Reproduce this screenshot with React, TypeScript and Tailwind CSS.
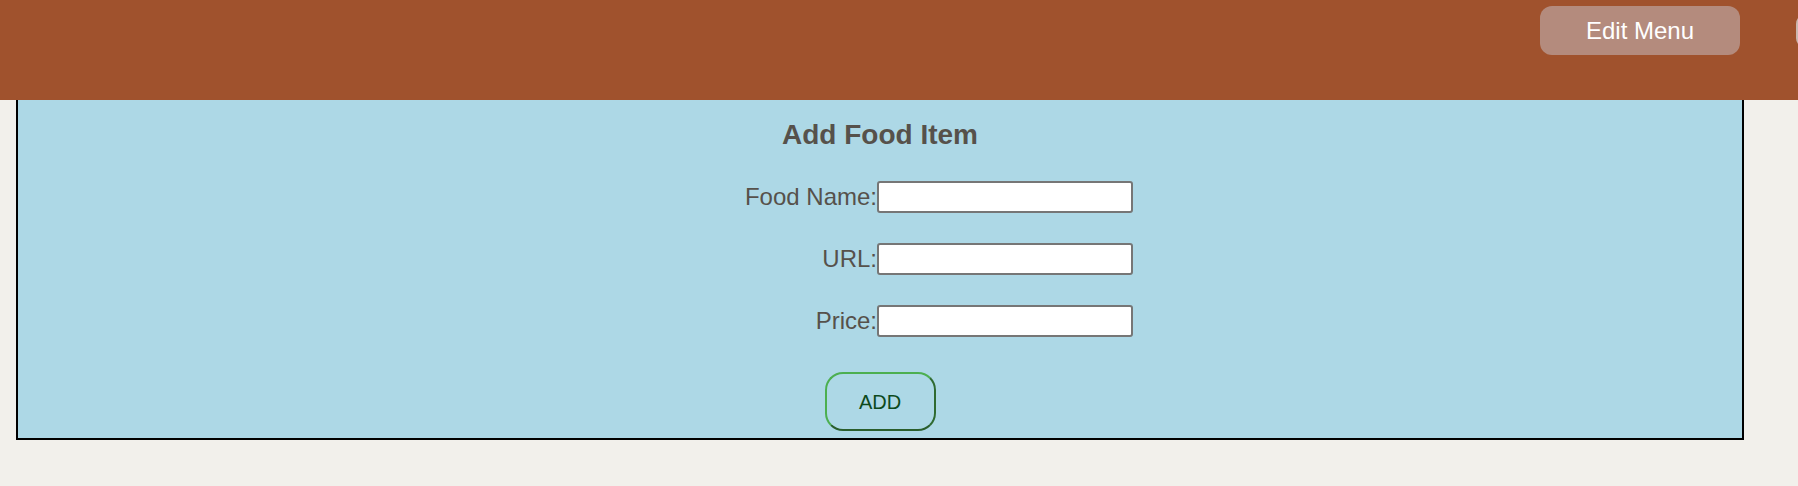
import React, { useState } from 'react';

const FormRow: React.FC<{ label: string; value: string; onChange: (v: string) => void }> = ({ label, value, onChange }) => (
    <div className="flex items-center">
        <label className="w-[250px] text-right text-[24px] leading-[28px] text-[#56514b]">{label}</label>
        <input
            type="text"
            value={value}
            onChange={(e) => onChange(e.target.value)}
            className="w-[256px] h-[32px] bg-white border-2 border-[#767676] rounded-[3px] px-1 text-[20px] outline-none"
        />
    </div>
);

export default function App() {
    const [name, setName] = useState('');
    const [url, setUrl] = useState('');
    const [price, setPrice] = useState('');

    return (
        <div className="min-h-screen w-full bg-[#f2f0eb] font-['Liberation_Sans',Arial,Helvetica,sans-serif]">
            {/* top bar */}
            <header className="h-[100px] bg-[#a0522d] flex items-start overflow-hidden">
                <div className="flex-grow" />
                <button className="mt-[6px] w-[200px] h-[49px] shrink-0 rounded-[12px] bg-[#b48b7d] text-white text-[24px] leading-none">
                    Edit Menu
                </button>
                <div className="ml-[56px] mt-[14px] w-[120px] h-[34px] shrink-0 -mr-[118px] rounded-[10px] bg-[#cbb7b0]" />
            </header>

            <div className="ml-[16px] mr-[54px] h-[340px] bg-[#add8e6] border-2 border-t-0 border-black flex flex-col items-center">
                <h2 className="pt-[19px] text-[28px] leading-[32px] font-bold text-[#56514b]">Add Food Item</h2>

                <div className="mt-[30px] flex flex-col gap-[30px]">
                    <FormRow label="Food Name:" value={name} onChange={setName} />
                    <FormRow label="URL:" value={url} onChange={setUrl} />
                    <FormRow label="Price:" value={price} onChange={setPrice} />
                </div>

                <button className="mt-[35px] w-[111px] h-[59px] rounded-[18px] border-2 border-t-[#4caf50] border-l-[#4caf50] border-b-[#2a5e2c] border-r-[#2f6a31] text-[20px] leading-none text-[#0d4a1c]">
                    ADD
                </button>
            </div>
        </div>
    );
}
